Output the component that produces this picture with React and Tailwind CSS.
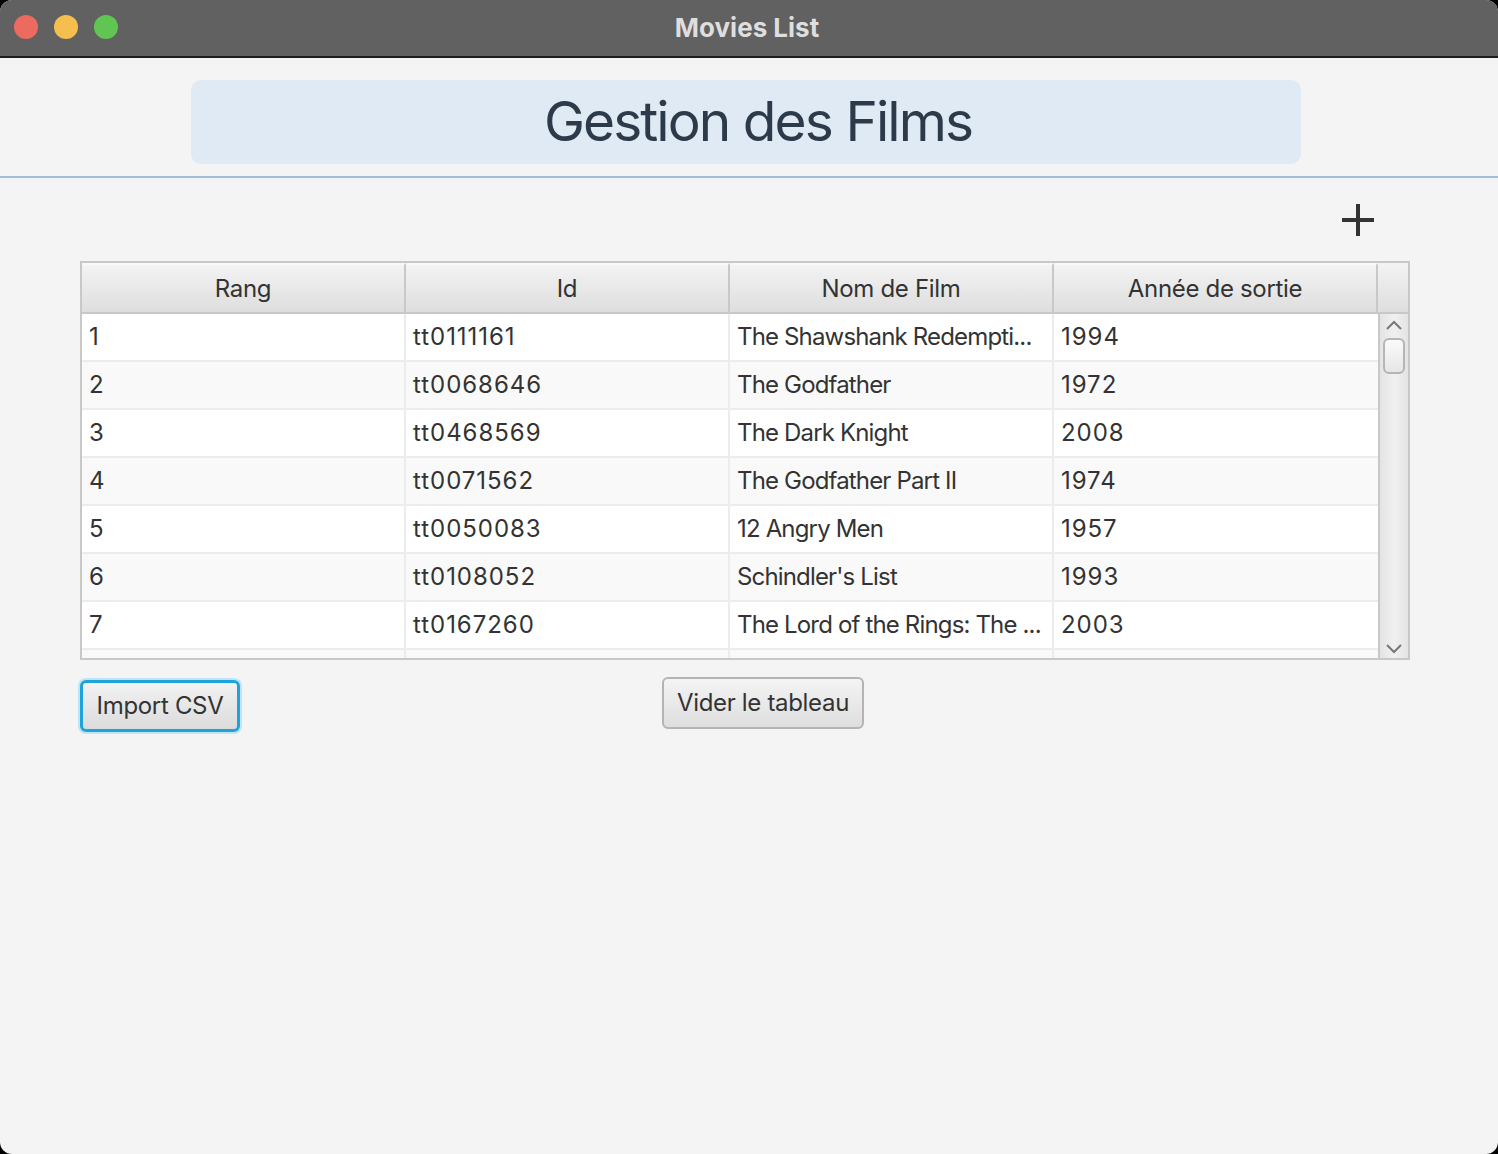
import React from 'react';

const films = [
  { rang: '1', id: 'tt0111161', nom: 'The Shawshank Redempti...', annee: '1994' },
  { rang: '2', id: 'tt0068646', nom: 'The Godfather', annee: '1972' },
  { rang: '3', id: 'tt0468569', nom: 'The Dark Knight', annee: '2008' },
  { rang: '4', id: 'tt0071562', nom: 'The Godfather Part II', annee: '1974' },
  { rang: '5', id: 'tt0050083', nom: '12 Angry Men', annee: '1957' },
  { rang: '6', id: 'tt0108052', nom: "Schindler's List", annee: '1993' },
  { rang: '7', id: 'tt0167260', nom: 'The Lord of the Rings: The ...', annee: '2003' },
];

const colonnes = ['Rang', 'Id', 'Nom de Film', 'Année de sortie'];

const App = () => {
  return (
    <div className="w-[1498px] h-[1154px] bg-black overflow-hidden" style={{ fontFamily: 'Inter, "Noto Sans", sans-serif' }}>
      <div className="w-full h-full bg-[#f4f4f4] rounded-[12px] overflow-hidden flex flex-col">

        {/* barre de titre */}
        <div className="h-[58px] bg-[#616161] border-b-2 border-[#1e1e1e] flex items-center relative shrink-0">
          <div className="flex gap-[16px] pl-[14px] pb-[2px]">
            <div className="w-[24px] h-[24px] rounded-full bg-[#ec6a5e]"></div>
            <div className="w-[24px] h-[24px] rounded-full bg-[#f4bf4f]"></div>
            <div className="w-[24px] h-[24px] rounded-full bg-[#61c554]"></div>
          </div>
          <div className="absolute inset-0 flex items-center justify-center text-[26px] font-bold text-[#dedede] pb-[2px] pr-[4px]">
            Movies List
          </div>
        </div>

        {/* en-tete */}
        <div className="pt-[22px] pb-[12px] flex justify-center border-b-2 border-[#a3bcdc]">
          <div className="w-[1110px] h-[84px] mr-[6px] pl-[24px] bg-[#e0eaf4] rounded-[10px] flex items-center justify-center text-[55px] tracking-[-0.035em] text-[#2d3a4a] leading-none pb-[2px]">
            Gestion des Films
          </div>
        </div>

        <div className="flex justify-end pr-[122px] pt-[24px] h-[83px]">
          <svg width="36" height="36" viewBox="0 0 36 36">
            <rect x="16" y="2" width="4" height="32" fill="#333" />
            <rect x="2" y="16" width="32" height="4" fill="#333" />
          </svg>
        </div>

        {/* tableau */}
        <div className="ml-[80px] w-[1330px] h-[399px] border-2 border-[#c8c8c8] bg-white flex flex-col overflow-hidden tracking-[-0.02em]">
          <div className="flex h-[51px] shrink-0 border-b-2 border-[#c8c8c8]">
            {colonnes.map((c) => (
              <div key={c} className="w-[324px] h-full flex items-center justify-center text-[24px] text-[#333] bg-gradient-to-b from-[#f3f3f3] to-[#dedede] border-r-2 border-[#c8c8c8] border-t-2 border-t-[#f8f8f8]">
                {c}
              </div>
            ))}
            <div className="flex-1 h-full bg-gradient-to-b from-[#f3f3f3] to-[#dedede]"></div>
          </div>
          <div className="flex flex-1 min-h-0">
            <div className="w-[1296px] overflow-hidden">
              {[...films, { rang: '', id: '', nom: '', annee: '' }].map((f, i) => (
                <div key={i} className={`flex h-[48px] border-b-2 border-[#ececec] ${i % 2 === 0 ? 'bg-white' : 'bg-[#f9f9f9]'}`}>
                  <div className="w-[324px] shrink-0 border-r-2 border-[#ececec] flex items-center pl-[7px] text-[24px] tracking-[0.04em] text-[#333]">{f.rang}</div>
                  <div className="w-[324px] shrink-0 border-r-2 border-[#ececec] flex items-center pl-[7px] text-[24px] tracking-[0.04em] text-[#333]">{f.id}</div>
                  <div className="w-[324px] shrink-0 border-r-2 border-[#ececec] flex items-center pl-[7px] text-[24px] tracking-[-0.035em] text-[#333] whitespace-nowrap overflow-hidden">{f.nom}</div>
                  <div className="w-[324px] shrink-0 flex items-center pl-[7px] text-[24px] tracking-[0.04em] text-[#333]">{f.annee}</div>
                </div>
              ))}
            </div>
            {/* barre de defilement */}
            <div className="flex-1 bg-gradient-to-r from-[#e4e4e4] via-[#f0f0f0] to-[#e4e4e4] border-l-2 border-[#c8c8c8] flex flex-col items-center">
              <svg width="20" height="14" viewBox="0 0 20 14" className="mt-[4px]">
                <path d="M3 11 L10 4 L17 11" stroke="#777" strokeWidth="2" fill="none" />
              </svg>
              <div className="w-[22px] h-[36px] mt-[6px] rounded-[6px] border-2 border-[#b5b5b5] bg-gradient-to-b from-[#fafafa] to-[#e6e6e6]"></div>
              <div className="flex-1"></div>
              <svg width="20" height="14" viewBox="0 0 20 14" className="mb-[2px]">
                <path d="M3 3 L10 10 L17 3" stroke="#777" strokeWidth="2" fill="none" />
              </svg>
            </div>
          </div>
        </div>

        {/* boutons */}
        <div className="flex items-start pl-[80px] mt-[17px] tracking-[-0.02em]">
          <button className="w-[160px] h-[52px] mt-[3px] rounded-[6px] border-[3px] border-[#1ea3da] shadow-[0_0_0_2px_#bfe4f4] bg-gradient-to-b from-[#f2f2f2] to-[#dcdcdc] text-[24px] text-[#333] flex items-center justify-center">
            Import CSV
          </button>
          <button className="ml-[422px] w-[202px] h-[52px] rounded-[6px] border-2 border-[#b4b4b4] bg-gradient-to-b from-[#f4f4f4] to-[#dedede] text-[24px] text-[#333] flex items-center justify-center">
            Vider le tableau
          </button>
        </div>
      </div>
    </div>
  );
};

export default App;
